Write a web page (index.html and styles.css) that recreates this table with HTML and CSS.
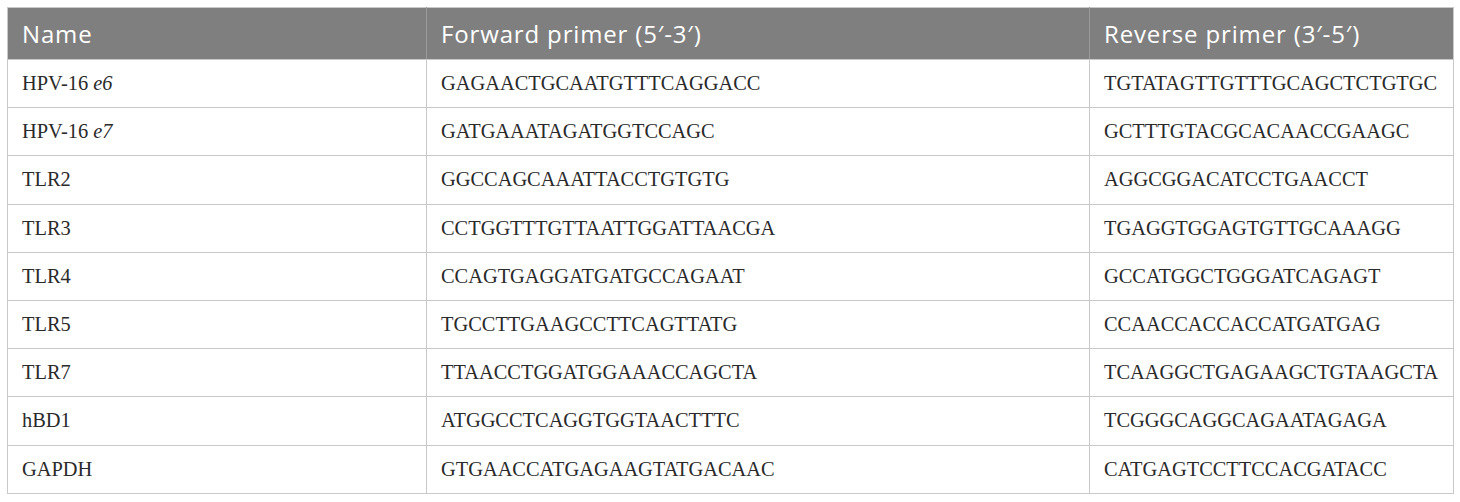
FILE: index.html
```html
<!DOCTYPE html>
<html>
<head>
<meta charset="utf-8">
<link rel="stylesheet" href="styles.css">
</head>
<body>
<table class="primers">
  <colgroup>
    <col class="c-name">
    <col class="c-fwd">
    <col class="c-rev">
  </colgroup>
  <thead>
    <tr>
      <th>Name</th>
      <th>Forward primer (5′-3′)</th>
      <th>Reverse primer (3′-5′)</th>
    </tr>
  </thead>
  <tbody>
    <tr><td>HPV-16 <i>e6</i></td><td>GAGAACTGCAATGTTTCAGGACC</td><td>TGTATAGTTGTTTGCAGCTCTGTGC</td></tr>
    <tr><td>HPV-16 <i>e7</i></td><td>GATGAAATAGATGGTCCAGC</td><td>GCTTTGTACGCACAACCGAAGC</td></tr>
    <tr><td>TLR2</td><td>GGCCAGCAAATTACCTGTGTG</td><td>AGGCGGACATCCTGAACCT</td></tr>
    <tr><td>TLR3</td><td>CCTGGTTTGTTAATTGGATTAACGA</td><td>TGAGGTGGAGTGTTGCAAAGG</td></tr>
    <tr><td>TLR4</td><td>CCAGTGAGGATGATGCCAGAAT</td><td>GCCATGGCTGGGATCAGAGT</td></tr>
    <tr><td>TLR5</td><td>TGCCTTGAAGCCTTCAGTTATG</td><td>CCAACCACCACCATGATGAG</td></tr>
    <tr><td>TLR7</td><td>TTAACCTGGATGGAAACCAGCTA</td><td>TCAAGGCTGAGAAGCTGTAAGCTA</td></tr>
    <tr><td>hBD1</td><td>ATGGCCTCAGGTGGTAACTTTC</td><td>TCGGGCAGGCAGAATAGAGA</td></tr>
    <tr><td>GAPDH</td><td>GTGAACCATGAGAAGTATGACAAC</td><td>CATGAGTCCTTCCACGATACC</td></tr>
  </tbody>
</table>
</body>
</html>
```

FILE: styles.css
```css
html, body {
  margin: 0;
  padding: 0;
  background: #ffffff;
}

body {
  padding: 7px 0 0 7px;
}

.primers {
  border-collapse: collapse;
  table-layout: fixed;
  width: 1446px;
  border: 1px solid #c9c9c9;
}

.c-name { width: 419px; }
.c-fwd { width: 663px; }
.c-rev { width: 364px; }

.primers th {
  background: #7f7f7f;
  color: #ffffff;
  font-family: "Open Sans", "Liberation Sans", sans-serif;
  font-weight: 400;
  font-size: 24px;
  letter-spacing: 0.85px;
  text-align: left;
  height: 52px;
  padding: 0 0 0 14px;
  border: 1px solid #9a9a9a;
  border-top-color: #c9c9c9;
  border-bottom: 1px solid #c9c9c9;
  box-sizing: border-box;
  vertical-align: middle;
}

.primers th:first-child { border-left-color: #c9c9c9; }
.primers th:last-child { border-right-color: #c9c9c9; }

.primers td {
  font-family: "Liberation Serif", "Times New Roman", serif;
  font-size: 20.4px;
  color: #2a2a2a;
  height: 48.2px;
  padding: 0 0 0 14px;
  border: 1px solid #c9c9c9;
  box-sizing: border-box;
  vertical-align: middle;
  white-space: nowrap;
}
```
